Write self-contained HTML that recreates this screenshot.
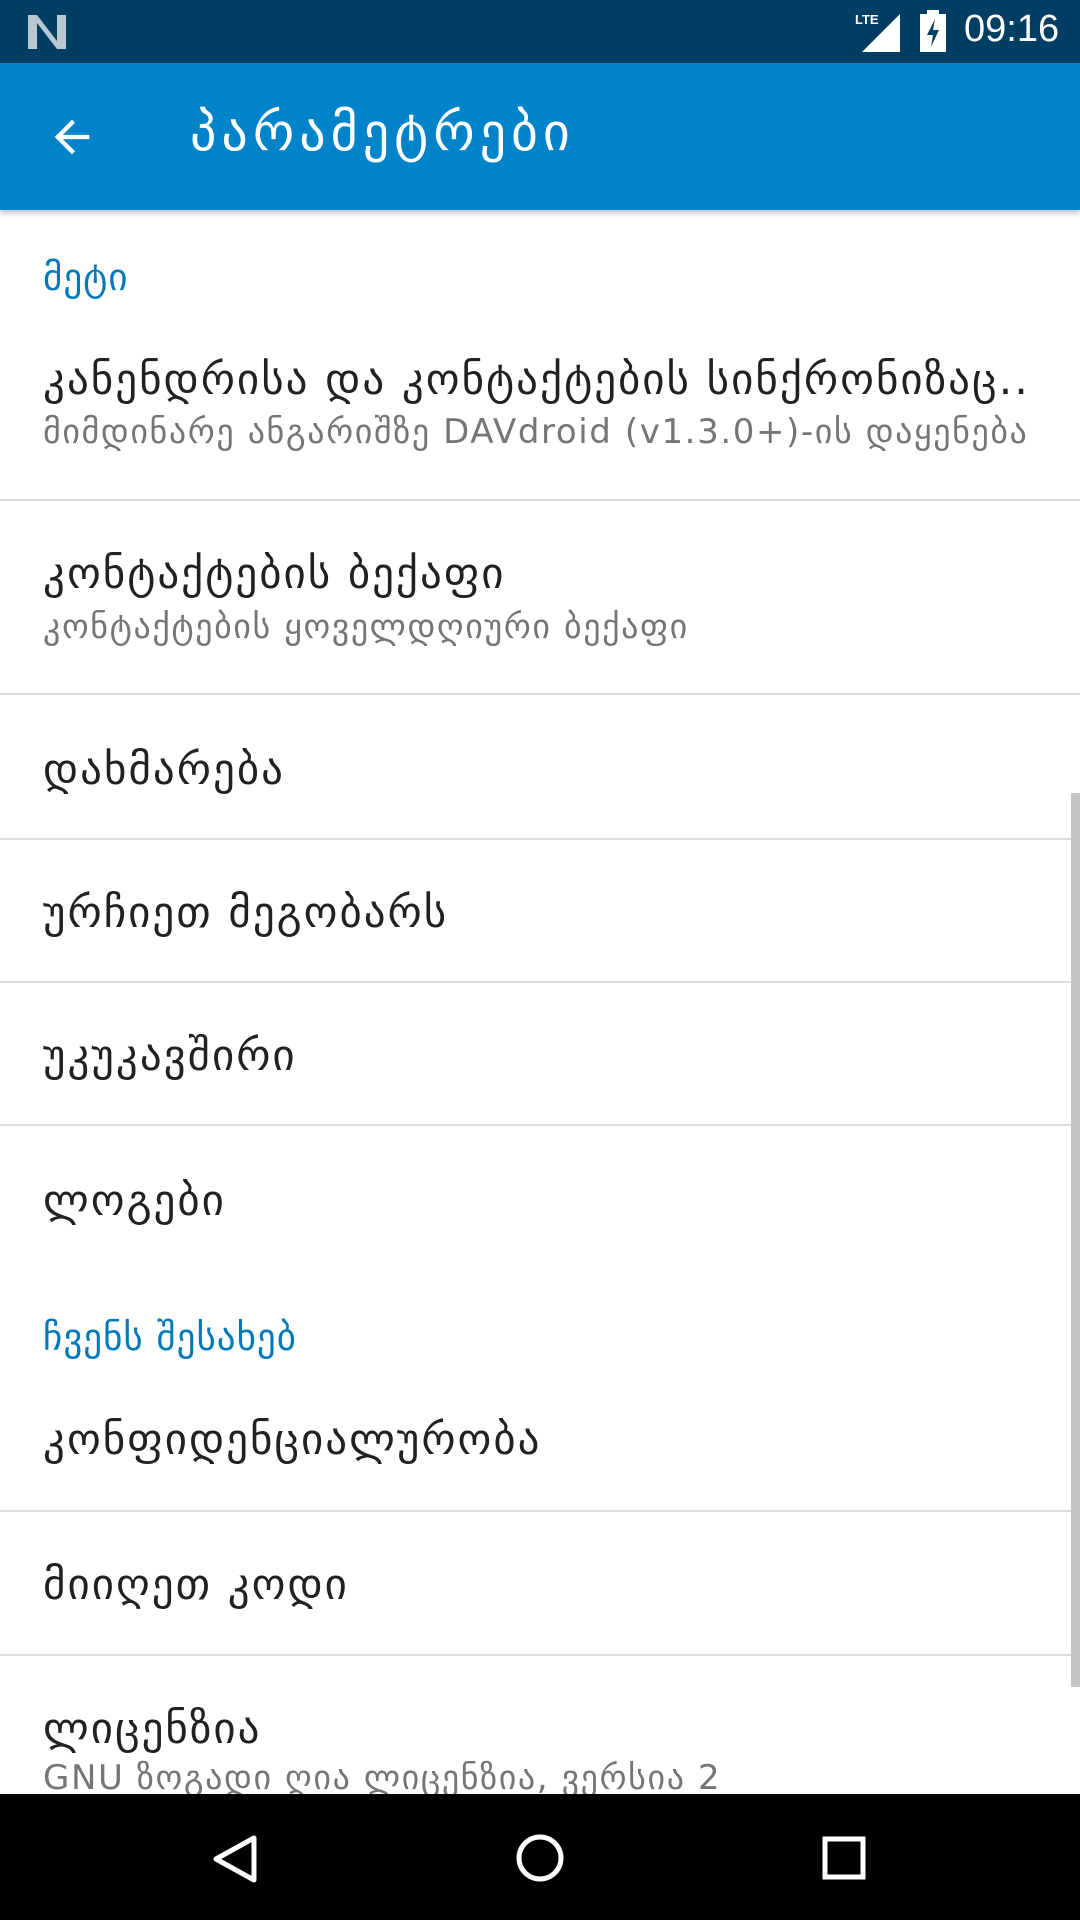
<!DOCTYPE html>
<html><head><meta charset="utf-8"><style>
*{margin:0;padding:0;box-sizing:border-box}
body{width:1080px;height:1920px;overflow:hidden;background:#fff;font-family:"DejaVu Sans","Liberation Sans",sans-serif;position:relative}
.sb{position:absolute;top:0;left:0;width:1080px;height:63px;background:#003f63}
.tb{position:absolute;top:63px;left:0;width:1080px;height:147px;background:#0083c9;box-shadow:0 3px 6px rgba(0,0,0,.25)}
.t{position:absolute;left:190px;top:40px;color:#fff;font-size:52px;letter-spacing:5px}
.a{position:absolute;white-space:nowrap}
.h{color:#0079bb;font-size:37px;left:43px;letter-spacing:1px}
.ti{color:#212121;font-size:43px;left:43px;letter-spacing:2px}
.su{color:#757575;font-size:34px;left:43px;letter-spacing:1.6px}
.d{position:absolute;left:0;width:1080px;height:2px;background:#dcdcdc}
.nav{position:absolute;top:1794px;left:0;width:1080px;height:126px;background:#000}
</style></head><body>
<div class="sb">
<svg style="position:absolute;left:28px;top:15px" width="38" height="34" viewBox="0 0 38 34"><path d="M0 0h9l20 26V0h9v34h-9L9 8v26H0z" fill="#b8c7d2"/></svg>
<div style="position:absolute;left:855px;top:12px;color:#fff;font-size:13px;font-family:'Liberation Sans';font-weight:bold">LTE</div>
<svg style="position:absolute;left:862px;top:12px" width="40" height="40"><path d="M0 40L38 2V40z" fill="#fff"/></svg>
<svg style="position:absolute;left:920px;top:10px" width="26" height="42"><path d="M7 0h12v4h7v38H0V4h7z" fill="#fff"/><path d="M15 9l-8 16h6l-2 12 8-17h-6z" fill="#003f63"/></svg>
<div style="position:absolute;left:964px;top:8px;color:#fff;font-size:38px;font-family:'Liberation Sans'">09:16</div>
</div>
<div class="tb">
<svg style="position:absolute;left:46px;top:48px" width="52" height="52" viewBox="0 0 24 24"><path d="M20 11H7.8l5.6-5.6L12 4l-8 8 8 8 1.4-1.4L7.8 13H20z" fill="#fff"/></svg>
<div class="t">პარამეტრები</div>
</div>
<div class="a h" style="top:256px">მეტი</div>
<div class="a ti" style="top:355px">კანენდრისა და კონტაქტების სინქრონიზაც..</div>
<div class="a su" style="top:412px">მიმდინარე ანგარიშზე DAVdroid (v1.3.0+)-ის დაყენება</div>
<div class="d" style="top:499px"></div>
<div class="a ti" style="top:549px">კონტაქტების ბექაფი</div>
<div class="a su" style="top:607px">კონტაქტების ყოველდღიური ბექაფი</div>
<div class="d" style="top:693px"></div>
<div class="a ti" style="top:745px">დახმარება</div>
<div class="d" style="top:838px"></div>
<div class="a ti" style="top:888px">ურჩიეთ მეგობარს</div>
<div class="d" style="top:981px"></div>
<div class="a ti" style="top:1031px">უკუკავშირი</div>
<div class="d" style="top:1124px"></div>
<div class="a ti" style="top:1176px">ლოგები</div>
<div class="a h" style="top:1316px">ჩვენს შესახებ</div>
<div class="a ti" style="top:1415px">კონფიდენციალურობა</div>
<div class="d" style="top:1510px"></div>
<div class="a ti" style="top:1560px">მიიღეთ კოდი</div>
<div class="d" style="top:1654px"></div>
<div class="a ti" style="top:1704px">ლიცენზია</div>
<div class="a su" style="top:1758px">GNU ზოგადი ღია ლიცენზია, ვერსია 2</div>
<div style="position:absolute;left:1071px;top:793px;width:9px;height:894px;background:#c4c4c4"></div>
<div class="nav">
<svg style="position:absolute;left:210px;top:40px" width="50" height="50"><path d="M44 4L6 25l38 21z" fill="none" stroke="#fff" stroke-width="5" stroke-linejoin="round"/></svg>
<svg style="position:absolute;left:514px;top:38px" width="52" height="52"><circle cx="26" cy="26" r="21" fill="none" stroke="#fff" stroke-width="5"/></svg>
<svg style="position:absolute;left:822px;top:42px" width="44" height="44"><rect x="3" y="3" width="38" height="38" fill="none" stroke="#fff" stroke-width="5"/></svg>
</div>
</body></html>
